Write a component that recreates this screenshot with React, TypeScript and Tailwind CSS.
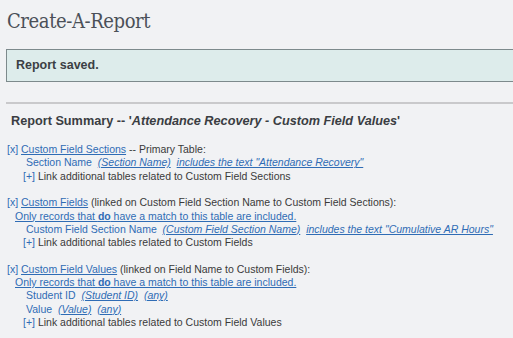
export default function App() {
  const link = "text-[#2f6cb5] underline";
  return (
    <div className="min-h-screen w-[513px] h-[338px] overflow-hidden bg-[#f1f2f4] font-['Liberation_Sans',Arial,sans-serif] text-[#3a3a3a]">
      <h1 className="pl-[7px] pt-[8px] text-[20px] leading-[26px] text-[#4b5058] font-['DejaVu_Serif_Condensed','DejaVu_Serif',serif] [font-stretch:condensed] tracking-[-0.4px]">
        Create-A-Report
      </h1>
      <div className="ml-[6px] mt-[15px] -mr-[4px] h-[33px] border border-[#7d8a8c] bg-[#ddeceb] flex items-center pl-[9px] text-[12.5px] font-bold text-[#3b3f44]">
        Report saved.
      </div>
      <div className="ml-[6px] mt-[20px] h-[2px] bg-[#c9c9cb]" />
      <div className="pl-[11px] mt-[8px] text-[12.7px] font-bold text-[#3a3d42]">
        Report Summary -- '<i>Attendance Recovery - Custom Field Values</i>'
      </div>
      <div className="pl-[7px] mt-[12px] text-[10.5px] leading-[13.3px]">
        <div>
          <span className="text-[#2f6cb5]">[x]</span> <span className={link}>Custom Field Sections</span> -- Primary Table:
        </div>
        <div className="pl-[19px] text-[#2f6cb5]">
          Section Name&nbsp; <i className="underline">(Section Name)</i>&nbsp; <i className="underline">includes the text "Attendance Recovery"</i>
        </div>
        <div className="pl-[16px]">
          <span className="text-[#2f6cb5]">[+]</span> Link additional tables related to Custom Field Sections
        </div>

        <div className="mt-[13.3px]">
          <span className="text-[#2f6cb5]">[x]</span> <span className={link}>Custom Fields</span> (linked on Custom Field Section Name to Custom Field Sections):
        </div>
        <div className="pl-[8px]">
          <span className={link}>Only records that <b>do</b> have a match to this table are included.</span>
        </div>
        <div className="pl-[19px] text-[#2f6cb5] whitespace-nowrap">
          Custom Field Section Name&nbsp; <i className="underline">(Custom Field Section Name)</i>&nbsp; <i className="underline">includes the text "Cumulative AR Hours"</i>
        </div>
        <div className="pl-[16px]">
          <span className="text-[#2f6cb5]">[+]</span> Link additional tables related to Custom Fields
        </div>

        <div className="mt-[13.3px]">
          <span className="text-[#2f6cb5]">[x]</span> <span className={link}>Custom Field Values</span> (linked on Field Name to Custom Fields):
        </div>
        <div className="pl-[8px]">
          <span className={link}>Only records that <b>do</b> have a match to this table are included.</span>
        </div>
        <div className="pl-[19px] text-[#2f6cb5]">
          Student ID&nbsp; <i className="underline">(Student ID)</i>&nbsp; <i className="underline">(any)</i>
        </div>
        <div className="pl-[19px] text-[#2f6cb5]">
          Value&nbsp; <i className="underline">(Value)</i>&nbsp; <i className="underline">(any)</i>
        </div>
        <div className="pl-[16px]">
          <span className="text-[#2f6cb5]">[+]</span> Link additional tables related to Custom Field Values
        </div>
      </div>
    </div>
  );
}
